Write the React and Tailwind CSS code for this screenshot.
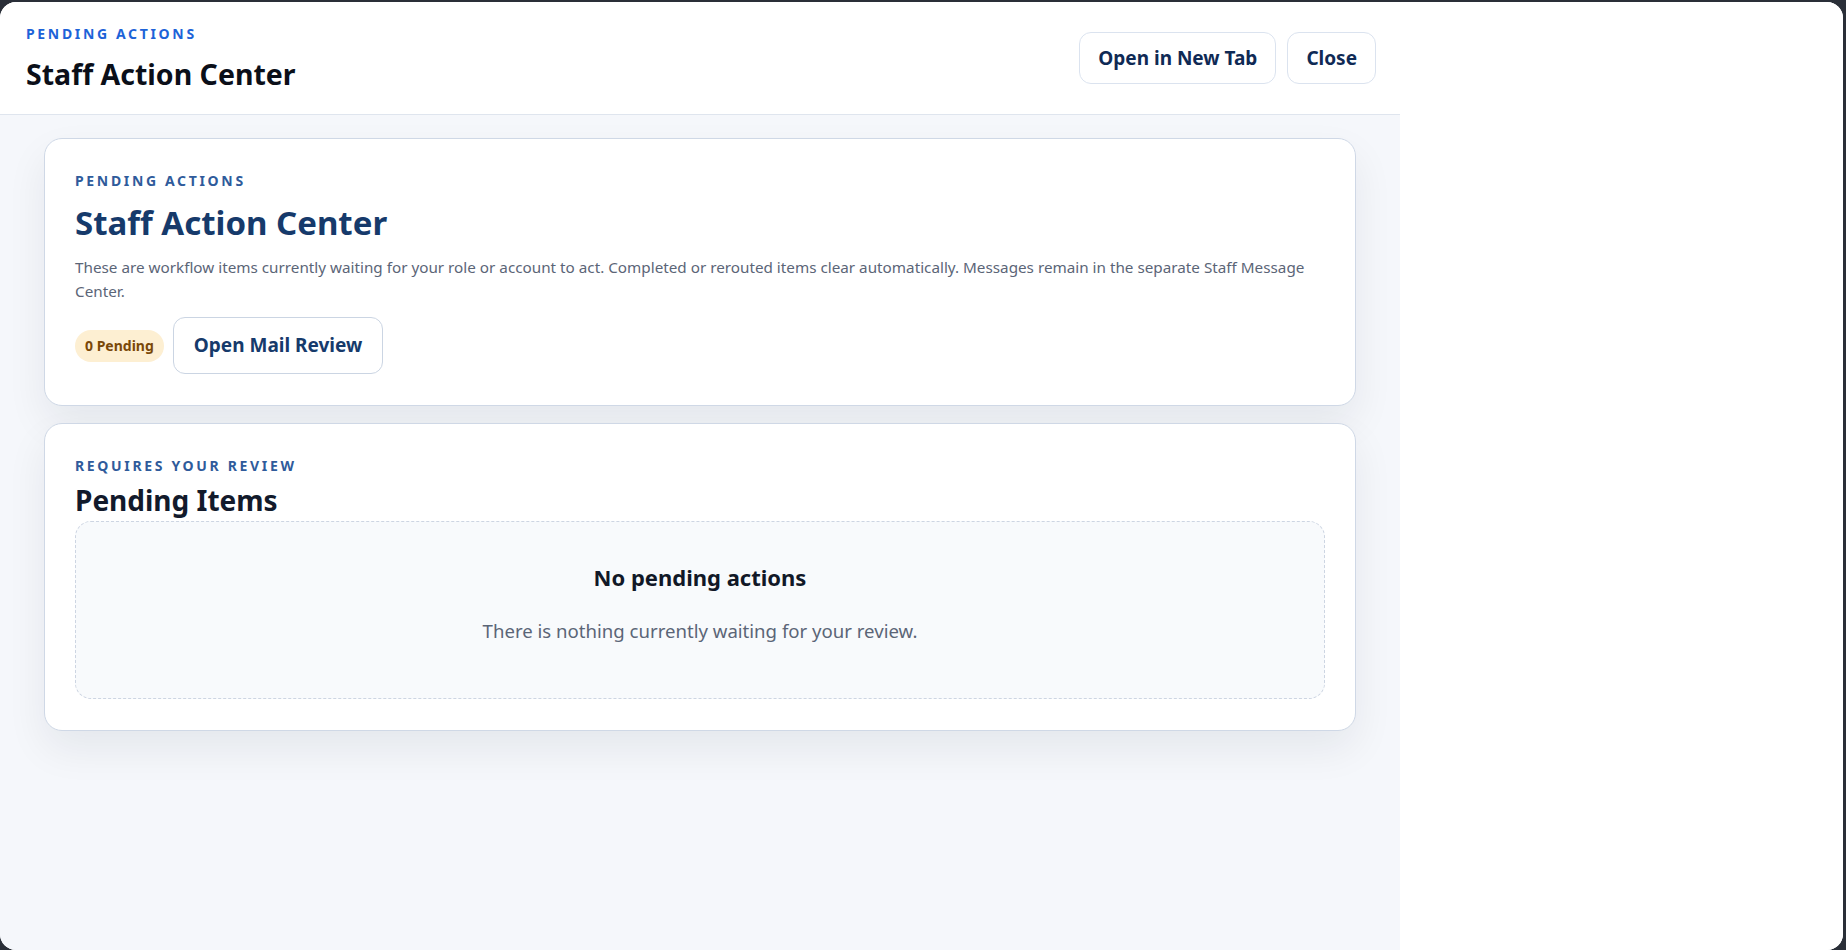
import React from 'react';

const font = "font-['Noto_Sans','Open_Sans',sans-serif]";

const Eyebrow = ({ children, className = '' }) => (
  <p className={`text-[14px] font-bold uppercase tracking-[0.19em] leading-[18px] ${className}`}>{children}</p>
);

const Card = ({ children }) => (
  <div className="rounded-[18px] border border-[#cfd8e6] bg-white px-[30px] pt-[33px] pb-[31px] shadow-[0_18px_40px_rgba(15,23,42,0.07)]">
    {children}
  </div>
);

const ActionCenter = () => {
  return (
    <div className="flex flex-col gap-[17px]">
      <Card>
        <Eyebrow className="text-[#2f5b9b]">Pending Actions</Eyebrow>
        <h1 className="mt-[13px] text-[33px] leading-[40px] font-bold text-[#163a6b]">Staff Action Center</h1>
        <p className="mt-[12px] text-[15.25px] leading-6 text-[#5b6577]">
          These are workflow items currently waiting for your role or account to act. Completed or rerouted items clear automatically. Messages remain in the separate Staff Message Center.
        </p>
        <div className="mt-[14px] flex items-center gap-[9px]">
          <span className="rounded-full bg-[#fdefd2] px-[10px] py-[6px] text-[14px] leading-5 font-bold text-[#7a4808]">0 Pending</span>
          <button className="h-[57px] rounded-xl border border-[#cbd5e3] bg-white px-5 text-[19px] font-bold text-[#163a6b]">Open Mail Review</button>
        </div>
      </Card>

      <Card>
        <Eyebrow className="text-[#2f5b9b]">Requires Your Review</Eyebrow>
        <h2 className="mt-[9px] text-[28px] leading-[32px] font-bold text-[#121a2b]">Pending Items</h2>
        <div className="mt-[5px] flex h-[178px] flex-col items-center rounded-2xl border border-dashed border-[#cdd5e2] bg-[#f8fafc] pt-[40px]">
          <p className="text-[22px] leading-[30px] font-bold text-[#111827]">No pending actions</p>
          <p className="mt-[25px] text-[18.6px] leading-[28px] text-[#5b6577]">There is nothing currently waiting for your review.</p>
        </div>
      </Card>
    </div>
  );
};

export default function App() {
  return (
    <div className={`h-screen w-full bg-[#2a2f38] pt-[2px] pr-[3px] ${font}`}>
      <div className="flex h-full overflow-hidden rounded-2xl bg-white">
        <div className="flex w-[1400px] flex-col">
          <header className="flex h-[113px] shrink-0 items-center justify-between border-b border-[#dfe5ee] bg-white pl-[26px] pr-6">
            <div>
              <Eyebrow className="text-[#1d63d8]">Pending Actions</Eyebrow>
              <h1 className="mt-[13px] text-[28.5px] leading-[36px] font-bold text-[#0b0f19]">Staff Action Center</h1>
            </div>
            <div className="flex items-center gap-[11px]">
              <button className="h-[52px] rounded-xl border border-[#dbe3ef] bg-white px-[18px] text-[19px] font-bold text-[#0f2a55]">Open in New Tab</button>
              <button className="h-[52px] rounded-xl border border-[#dbe3ef] bg-white px-[18px] text-[19px] font-bold text-[#0f2a55]">Close</button>
            </div>
          </header>
          <main className="flex-1 bg-[#f5f7fb] px-[44px] pt-[23px]">
            <ActionCenter />
          </main>
        </div>
        <div className="flex-1 bg-white" />
      </div>
    </div>
  );
}
